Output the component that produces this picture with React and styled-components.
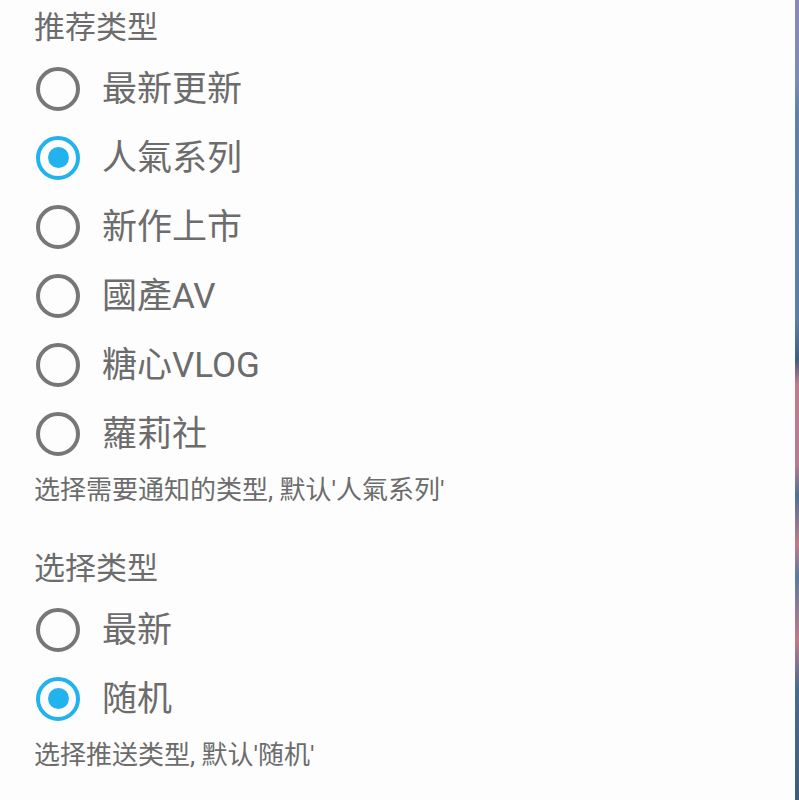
import styled, { createGlobalStyle } from 'styled-components';

const GlobalStyle = createGlobalStyle`
   html, body {
      margin: 0;
      padding: 0;
      background: #fdfdfd;
   }
   body {
      font-family: Roboto, "Noto Sans CJK SC", sans-serif;
   }
`;

const groups = [
   {
      title: '推荐类型',
      options: ['最新更新', '人氣系列', '新作上市', '國產AV', '糖心VLOG', '蘿莉社'],
      selected: 1,
      hint: "选择需要通知的类型, 默认'人氣系列'"
   },
   {
      title: '选择类型',
      options: ['最新', '随机'],
      selected: 1,
      hint: "选择推送类型, 默认'随机'"
   }
];

export default function App() {
   return (
      <>
         <GlobalStyle />
         <Screen>
            <Content>
               {groups.map((g, gi) => (
                  <Section key={g.title} $first={gi === 0}>
                     <Heading>{g.title}</Heading>
                     {g.options.map((opt, i) => (
                        <Row key={opt}>
                           <Radio $checked={i === g.selected} />
                           <Label>{opt}</Label>
                        </Row>
                     ))}
                     <Hint>{g.hint}</Hint>
                  </Section>
               ))}
            </Content>
            <EdgeStrip />
         </Screen>
      </>
   );
}

const Screen = styled.div`
   display: flex;
   width: 799px;
   height: 800px;
   overflow: hidden;
`;

const Content = styled.div`
   flex: 1;
   padding-left: 34px;
   display: flex;
   flex-direction: column;
`;

const Section = styled.div`
   display: flex;
   flex-direction: column;
   padding-top: ${(p) => (p.$first ? '2px' : '31px')};
`;

const Heading = styled.div`
   height: 52px;
   line-height: 52px;
   font-size: 31px;
   color: #6c6c6c;
`;

const Row = styled.div`
   height: 69px;
   display: flex;
   align-items: center;
`;

const Radio = styled.span`
   box-sizing: border-box;
   width: 44px;
   height: 44px;
   margin-left: 2px;
   margin-right: 22px;
   border-radius: 50%;
   border: 4px solid ${(p) => (p.$checked ? '#22b2ee' : '#777')};
   display: flex;
   align-items: center;
   justify-content: center;
   flex-shrink: 0;

   &::after {
      content: '';
      display: ${(p) => (p.$checked ? 'block' : 'none')};
      width: 21px;
      height: 21px;
      border-radius: 50%;
      background: #22b2ee;
   }
`;

const Label = styled.span`
   font-size: 35px;
   line-height: 40px;
   margin-top: 2px;
   color: #6c6c6c;
`;

const Hint = styled.div`
   height: 44px;
   line-height: 44px;
   font-size: 26px;
   color: #6c6c6c;
`;

const EdgeStrip = styled.div`
   width: 4px;
   flex-shrink: 0;
   background: linear-gradient(
      to bottom,
      #8b88bd 0%,
      #7c8cb8 10%,
      #5f82a6 14%,
      #5b7fa3 40%,
      #3f5f80 45%,
      #c07c8e 48%,
      #b97a8f 58%,
      #4e7394 62%,
      #c27b8c 68%,
      #5a7c9c 72%,
      #c07a8b 80%,
      #496d90 86%,
      #3e5d7c 100%
   );
`;
